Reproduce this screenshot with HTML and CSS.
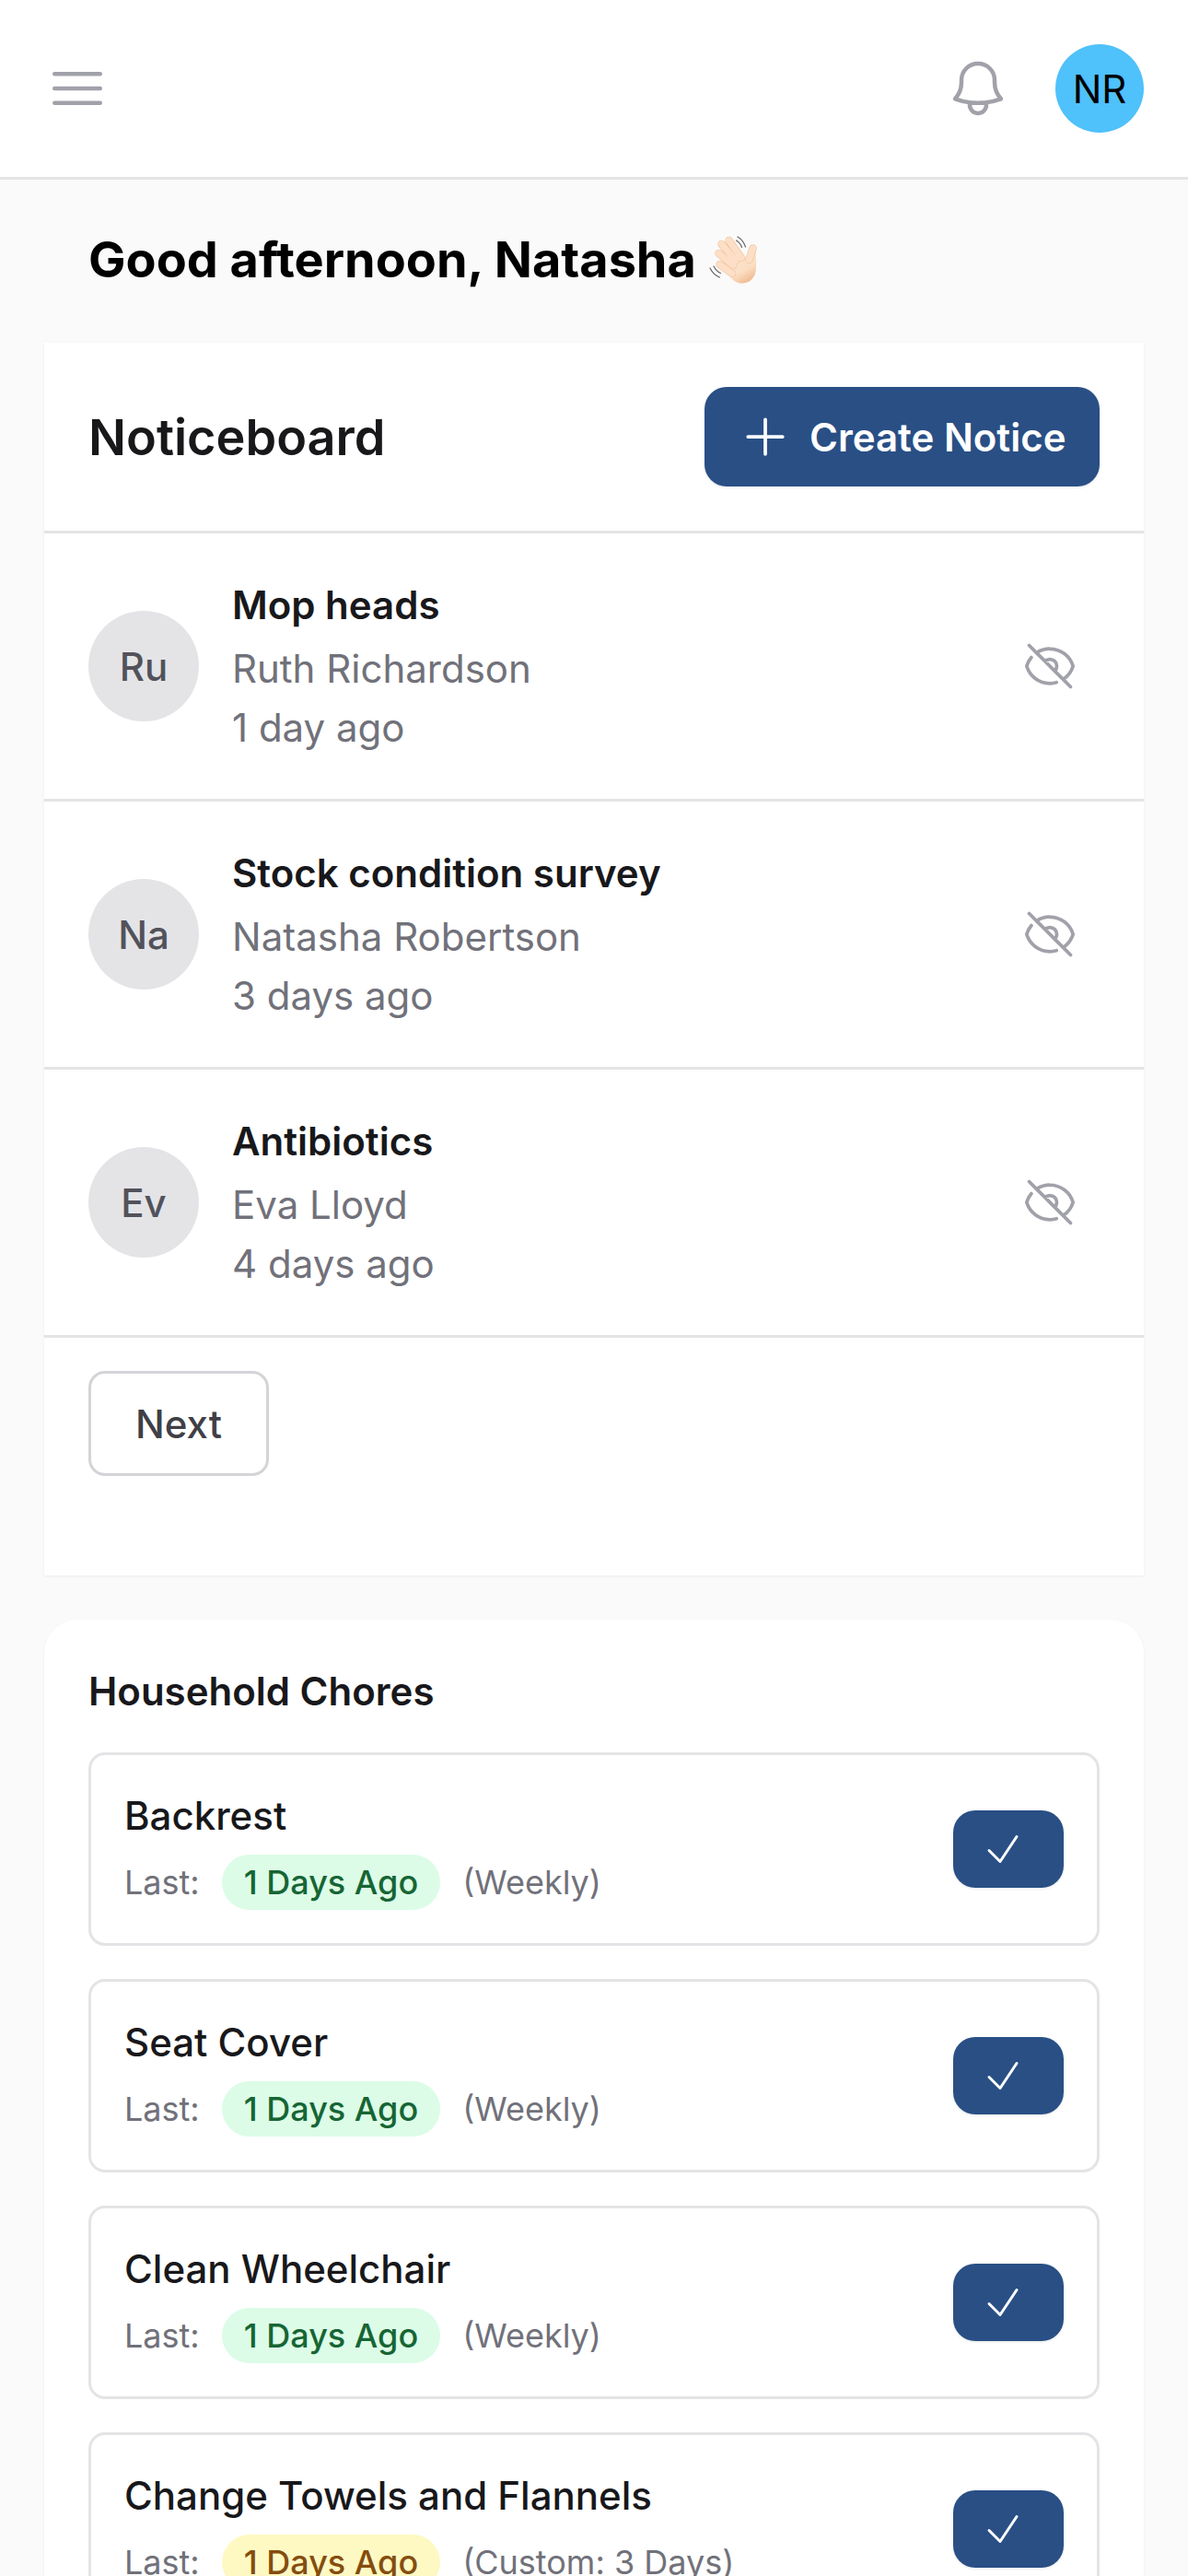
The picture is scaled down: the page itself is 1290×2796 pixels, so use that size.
FILE: index.html
```html
<!DOCTYPE html>
<html lang="en">
<head>
<meta charset="utf-8">
<title>Dashboard</title>
<link rel="stylesheet" href="styles.css">
</head>
<body>
<header class="topbar">
  <svg class="icon-menu" viewBox="0 0 24 24" fill="none" stroke="#a1a1aa" stroke-width="1.5" stroke-linecap="round" stroke-linejoin="round"><path d="M3.75 6.75h16.5M3.75 12h16.5m-16.5 5.25h16.5"/></svg>
  <div class="topbar-right">
    <svg class="icon-bell" viewBox="0 0 24 24" fill="none" stroke="#a1a1aa" stroke-width="1.5" stroke-linecap="round" stroke-linejoin="round"><path d="M14.857 17.082a23.848 23.848 0 0 0 5.454-1.31A8.967 8.967 0 0 1 18 9.75V9A6 6 0 0 0 6 9v.75a8.967 8.967 0 0 1-2.312 6.022c1.733.64 3.56 1.085 5.455 1.31m5.714 0a24.255 24.255 0 0 1-5.714 0m5.714 0a3 3 0 1 1-5.714 0"/></svg>
    <div class="user-avatar">NR</div>
  </div>
</header>
<main class="content">
  <h1 class="greeting">Good afternoon, Natasha
    <svg class="wave" viewBox="0 0 54 54">
      <defs>
        <linearGradient id="skin" x1="0" y1="0" x2="0.6" y2="1">
          <stop offset="0" stop-color="#fde6d0"/>
          <stop offset=".75" stop-color="#fbdfc4"/>
          <stop offset="1" stop-color="#f3c09a"/>
        </linearGradient>
      </defs>
      <path d="M13 35 27 17l13 8 5-11 5.500 2.500C51 24 52 36 50 42c-2.500 7-8 10.500-14 10.500-5 0-9-2-13-6.500z" fill="url(#skin)"/>
      <g fill="none" stroke-linecap="round">
        <g stroke="#f2c6a2" stroke-width="8.400">
          <path d="M21.500 6 35 25M13.500 10 29 28M10.500 20 26 33M11.500 32 25 42M47.500 14.500 43.500 27"/>
        </g>
        <g stroke="#fcdfc6" stroke-width="7">
          <path d="M21.500 6 35 25M13.500 10 29 28M10.500 20 26 33M11.500 32 25 42M47.500 14.500 43.500 27"/>
        </g>
        <g stroke="#666" stroke-width="1.200">
          <path d="M31 2c4 2.500 7 6 8.500 11M29.500 6c2.500 1.500 5 4 6 7.500M1 36c2 4 5.500 8 10.500 10M5 34c1.500 3 4 6 7.500 7.500"/>
        </g>
      </g>
    </svg>
  </h1>

  <section class="noticeboard">
    <div class="nb-head">
      <h2 class="nb-title">Noticeboard</h2>
      <button class="btn-create">
        <svg class="icon-plus" viewBox="0 0 24 24" fill="none" stroke="#fff" stroke-width="1.5" stroke-linecap="round" stroke-linejoin="round"><path d="M12 4.500v15m7.500-7.500h-15"/></svg>
        Create Notice
      </button>
    </div>
    <div class="notice">
      <div class="initials">Ru</div>
      <div class="notice-body">
        <div class="notice-title">Mop heads</div>
        <div class="notice-meta">Ruth Richardson</div>
        <div class="notice-meta">1 day ago</div>
      </div>
      <svg class="icon-eye" viewBox="0 0 24 24" fill="none" stroke="#a1a1aa" stroke-width="1.5" stroke-linecap="round" stroke-linejoin="round"><path d="M3.98 8.223A10.477 10.477 0 0 0 1.934 12C3.226 16.338 7.244 19.5 12 19.5c.993 0 1.953-.138 2.863-.395M6.228 6.228A10.451 10.451 0 0 1 12 4.5c4.756 0 8.773 3.162 10.065 7.498a10.522 10.522 0 0 1-4.293 5.774M6.228 6.228 3 3m3.228 3.228 3.65 3.65m7.894 7.894L21 21m-3.228-3.228-3.65-3.65m0 0a3 3 0 1 0-4.243-4.243m4.242 4.242L9.88 9.88"/></svg>
    </div>
    <div class="notice">
      <div class="initials">Na</div>
      <div class="notice-body">
        <div class="notice-title">Stock condition survey</div>
        <div class="notice-meta">Natasha Robertson</div>
        <div class="notice-meta">3 days ago</div>
      </div>
      <svg class="icon-eye" viewBox="0 0 24 24" fill="none" stroke="#a1a1aa" stroke-width="1.5" stroke-linecap="round" stroke-linejoin="round"><path d="M3.98 8.223A10.477 10.477 0 0 0 1.934 12C3.226 16.338 7.244 19.5 12 19.5c.993 0 1.953-.138 2.863-.395M6.228 6.228A10.451 10.451 0 0 1 12 4.5c4.756 0 8.773 3.162 10.065 7.498a10.522 10.522 0 0 1-4.293 5.774M6.228 6.228 3 3m3.228 3.228 3.65 3.65m7.894 7.894L21 21m-3.228-3.228-3.65-3.65m0 0a3 3 0 1 0-4.243-4.243m4.242 4.242L9.88 9.88"/></svg>
    </div>
    <div class="notice">
      <div class="initials">Ev</div>
      <div class="notice-body">
        <div class="notice-title">Antibiotics</div>
        <div class="notice-meta">Eva Lloyd</div>
        <div class="notice-meta">4 days ago</div>
      </div>
      <svg class="icon-eye" viewBox="0 0 24 24" fill="none" stroke="#a1a1aa" stroke-width="1.5" stroke-linecap="round" stroke-linejoin="round"><path d="M3.98 8.223A10.477 10.477 0 0 0 1.934 12C3.226 16.338 7.244 19.5 12 19.5c.993 0 1.953-.138 2.863-.395M6.228 6.228A10.451 10.451 0 0 1 12 4.5c4.756 0 8.773 3.162 10.065 7.498a10.522 10.522 0 0 1-4.293 5.774M6.228 6.228 3 3m3.228 3.228 3.65 3.65m7.894 7.894L21 21m-3.228-3.228-3.65-3.65m0 0a3 3 0 1 0-4.243-4.243m4.242 4.242L9.88 9.88"/></svg>
    </div>
    <div class="pager"><button class="btn-next">Next</button></div>
  </section>

  <section class="chores">
    <h2 class="chores-title">Household Chores</h2>
    <div class="chore">
      <div class="chore-body">
        <div class="chore-name">Backrest</div>
        <div class="chore-meta"><span>Last:</span><span class="pill pill-green">1 Days Ago</span><span>(Weekly)</span></div>
      </div>
      <button class="btn-check"><svg viewBox="0 0 24 24" fill="none" stroke="#fff" stroke-width="1.5" stroke-linecap="round" stroke-linejoin="round"><path d="m4.5 12.75 6 6 9-13.5"/></svg></button>
    </div>
    <div class="chore">
      <div class="chore-body">
        <div class="chore-name">Seat Cover</div>
        <div class="chore-meta"><span>Last:</span><span class="pill pill-green">1 Days Ago</span><span>(Weekly)</span></div>
      </div>
      <button class="btn-check"><svg viewBox="0 0 24 24" fill="none" stroke="#fff" stroke-width="1.5" stroke-linecap="round" stroke-linejoin="round"><path d="m4.5 12.75 6 6 9-13.5"/></svg></button>
    </div>
    <div class="chore">
      <div class="chore-body">
        <div class="chore-name">Clean Wheelchair</div>
        <div class="chore-meta"><span>Last:</span><span class="pill pill-green">1 Days Ago</span><span>(Weekly)</span></div>
      </div>
      <button class="btn-check"><svg viewBox="0 0 24 24" fill="none" stroke="#fff" stroke-width="1.5" stroke-linecap="round" stroke-linejoin="round"><path d="m4.5 12.75 6 6 9-13.5"/></svg></button>
    </div>
    <div class="chore">
      <div class="chore-body">
        <div class="chore-name">Change Towels and Flannels</div>
        <div class="chore-meta"><span>Last:</span><span class="pill pill-yellow">1 Days Ago</span><span>(Custom: 3 Days)</span></div>
      </div>
      <button class="btn-check"><svg viewBox="0 0 24 24" fill="none" stroke="#fff" stroke-width="1.5" stroke-linecap="round" stroke-linejoin="round"><path d="m4.5 12.75 6 6 9-13.5"/></svg></button>
    </div>
  </section>
</main>
</body>
</html>
```
FILE: styles.css
```css
* { box-sizing: border-box; }
html, body { margin: 0; padding: 0; height: 2796px; overflow: hidden; }
body { background: #fafafa; font-family: Inter, "Liberation Sans", sans-serif; color: #18181b; }
h1, h2 { margin: 0; }
button { font-family: inherit; cursor: pointer; }

.topbar { height: 195px; background: #fff; border-bottom: 3px solid #e4e4e7; display: flex; align-items: center; justify-content: space-between; padding: 0 48px; }
.icon-menu { width: 72px; height: 72px; display: block; }
.topbar-right { display: flex; align-items: center; gap: 48px; }
.icon-bell { width: 72px; height: 72px; display: block; }
.user-avatar { width: 96px; height: 96px; border-radius: 50%; background: #4fc1fb; color: #000; font-size: 42px; display: flex; align-items: center; justify-content: center; }

.content { padding: 0 48px; }
.greeting { font-size: 54px; line-height: 81px; font-weight: 700; color: #000; padding: 46px 48px 0; height: 177px; display: flex; align-items: flex-start; gap: 14px; }
.wave { width: 54px; height: 54px; margin-top: 14px; flex: none; }

.noticeboard { background: #fff; height: 1338px; box-shadow: 0 1px 3px rgba(0,0,0,.06); }
.nb-head { height: 207px; border-bottom: 3px solid #e4e4e7; padding: 0 48px; display: flex; align-items: center; justify-content: space-between; }
.nb-title { font-size: 54px; font-weight: 600; line-height: 81px; }
.btn-create { width: 429px; height: 108px; background: #294f85; color: #fff; border: 0; border-radius: 24px; font-size: 42px; font-weight: 600; display: flex; align-items: center; gap: 18px; padding: 0 0 0 36px; box-shadow: 0 1px 3px rgba(0,0,0,.1); }
.icon-plus { width: 60px; height: 60px; flex: none; }

.notice { height: 291px; border-bottom: 3px solid #e4e4e7; display: flex; align-items: center; padding: 0 72px 0 48px; }
.initials { width: 120px; height: 120px; border-radius: 50%; background: #e4e4e7; color: #52525b; font-size: 42px; font-weight: 500; display: flex; align-items: center; justify-content: center; flex: none; }
.notice-body { flex: 1; margin-left: 36px; padding-top: 3px; }
.notice-title { font-size: 42px; line-height: 60px; font-weight: 600; color: #18181b; margin-bottom: 7px; }
.notice-meta { font-size: 42px; line-height: 64px; color: #71717a; }
.icon-eye { width: 60px; height: 60px; flex: none; }

.pager { padding: 36px 48px 0; }
.btn-next { width: 196px; height: 114px; background: #fff; border: 3px solid #d4d4d8; border-radius: 18px; color: #3f3f46; font-size: 42px; font-weight: 500; }

.chores { background: #fff; margin-top: 48px; border-radius: 36px; padding: 48px; box-shadow: 0 1px 3px rgba(0,0,0,.06); }
.chores-title { font-size: 42px; line-height: 60px; font-weight: 600; margin-bottom: 36px; }
.chore { height: 210px; border: 3px solid #e4e4e7; border-radius: 18px; padding: 0 36px; display: flex; align-items: center; justify-content: space-between; margin-bottom: 36px; }
.chore-name { font-size: 42px; line-height: 60px; font-weight: 500; color: #18181b; margin-bottom: 12px; }
.chore-meta { display: flex; align-items: center; gap: 24px; font-size: 36px; line-height: 54px; color: #71717a; }
.pill { height: 60px; display: inline-flex; align-items: center; padding: 0 24px; border-radius: 30px; font-weight: 500; }
.pill-green { background: #dcfce7; color: #166534; }
.pill-yellow { background: #fef9c3; color: #854d0e; }
.btn-check { width: 120px; height: 84px; background: #294f85; border: 0; border-radius: 24px; padding: 0 12px 0 0; display: flex; align-items: center; justify-content: center; box-shadow: 0 1px 3px rgba(0,0,0,.1); flex: none; }
.btn-check svg { width: 48px; height: 48px; display: block; }
```
